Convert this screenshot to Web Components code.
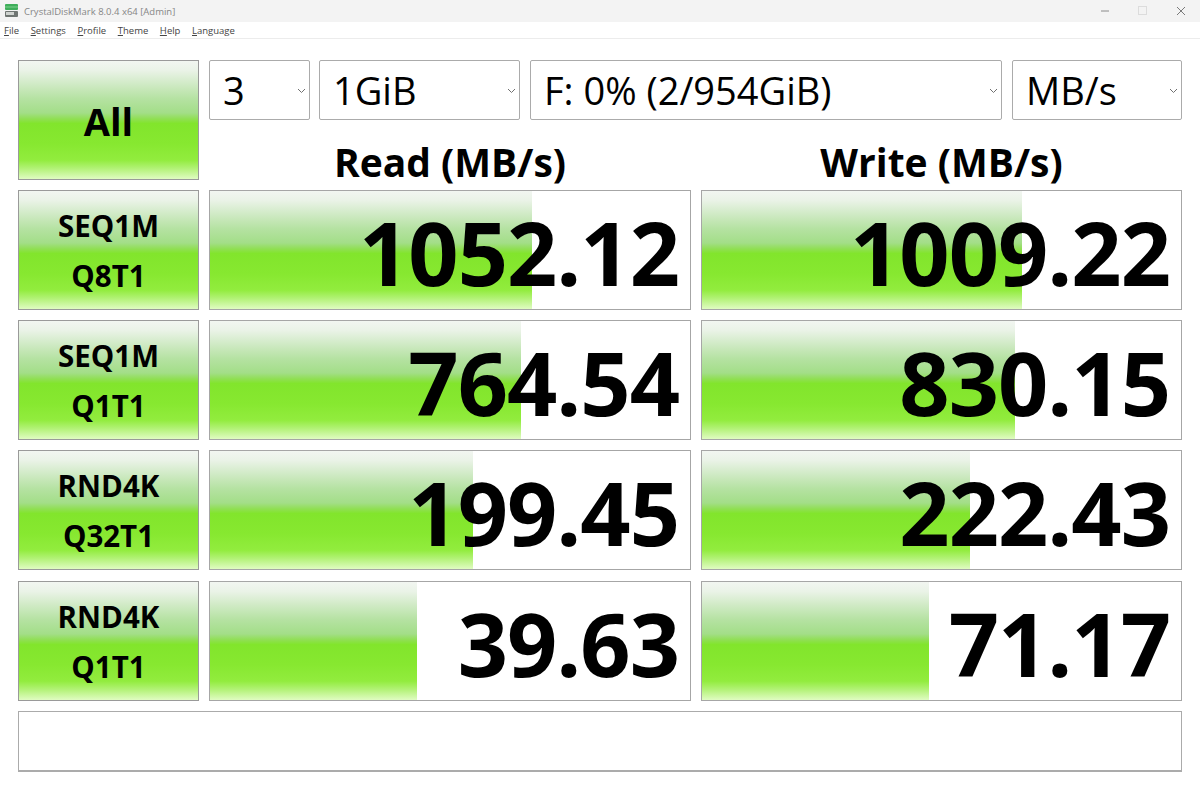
<!DOCTYPE html>
<html>
<head>
<meta charset="utf-8">
<title>CrystalDiskMark</title>
<style>
  html, body { margin: 0; padding: 0; background: #fff; height: 100%; overflow: hidden; }
  body { font-family: "Open Sans", "Noto Sans", sans-serif; color: #000; }
</style>
</head>
<body>
<cdm-window>
  <cdm-titlebar>CrystalDiskMark 8.0.4 x64 [Admin]</cdm-titlebar>
  <cdm-menu></cdm-menu>
  <cdm-panel></cdm-panel>
</cdm-window>

<script>
const GREEN = `linear-gradient(to bottom,
  #f2f6f1 0%, #eaf3e7 8%, #cfeac4 20%, #b5e2a2 32%, #a3de88 44%, #90df54 49%, #82e52c 53%, #87e830 70%, #92ec3e 84%, #b2f276 91%, #e0fcc2 100%)`;

class CdmWindow extends HTMLElement {
  constructor() {
    super();
    this.attachShadow({ mode: 'open' });
    this.shadowRoot.innerHTML = `
      <style>:host { display: flex; flex-direction: column; width: 1200px; height: 789px; }</style>
      <slot></slot>`;
  }
}

class CdmTitlebar extends HTMLElement {
  constructor() {
    super();
    this.attachShadow({ mode: 'open' });
    this.shadowRoot.innerHTML = `
      <style>
        :host { display: flex; align-items: center; height: 22px; background: #f3f3f3; padding-left: 5px; flex: none; }
        .logo { width: 14px; height: 14px; margin-right: 5px; }
        .t { font-size: 9.5px; color: #868686; flex: 1; }
        .btns { display: flex; align-items: center; }
        .btns svg { display: block; width: 10px; height: 10px; }
        .btns span { width: 38px; display: flex; justify-content: center; }
      </style>
      <svg class="logo" viewBox="0 0 14 14">
        <rect x="0" y="0" width="13" height="6" rx="1" fill="#3fae5a"/>
        <rect x="0" y="2.5" width="13" height="1" fill="#7fd08e"/>
        <rect x="0" y="7" width="13" height="6" rx="1" fill="#6f7572"/>
        <rect x="1" y="8" width="8" height="3" fill="#cfd3d0"/>
      </svg>
      <span class="t"><slot></slot></span>
      <span class="btns">
        <span><svg viewBox="0 0 10 10"><path d="M1 5h8" stroke="#8a8a8a" fill="none"/></svg></span>
        <span><svg viewBox="0 0 10 10"><rect x=".5" y=".5" width="8" height="8" stroke="#dcdcdc" fill="none"/></svg></span>
        <span><svg viewBox="0 0 10 10"><path d="M1 1l8 8M9 1l-8 8" stroke="#7a7a7a" fill="none"/></svg></span>
      </span>`;
  }
}

class CdmMenu extends HTMLElement {
  constructor() {
    super();
    this.attachShadow({ mode: 'open' });
    const items = ['File', 'Settings', 'Profile', 'Theme', 'Help', 'Language'];
    this.shadowRoot.innerHTML = `
      <style>
        :host { display: flex; gap: 11.6px; height: 16px; align-items: center; padding-left: 4px; font-size: 9.5px; color: #444;
          border-bottom: 1px solid #ececec; flex: none; }
        u { text-underline-offset: 1px; text-decoration-thickness: 1px; }
      </style>
      ${items.map(i => `<span><u>${i[0]}</u>${i.slice(1)}</span>`).join('')}`;
  }
}

class CdmSelect extends HTMLElement {
  constructor() {
    super();
    this.attachShadow({ mode: 'open' });
    this.shadowRoot.innerHTML = `
      <style>
        :host { display: flex; align-items: center; box-sizing: border-box; height: 60px; padding-left: 13px;
          border: 1px solid #ababab; border-radius: 2px; background: #fff; font-size: 38px; color: #000;
          position: relative; white-space: nowrap; }
        svg { position: absolute; right: 3px; top: 27px; width: 9px; height: 6px; }
      </style>
      <slot></slot>
      <svg viewBox="0 0 9 6"><path d="M1 1l3.5 3.5L8 1" stroke="#707070" fill="none"/></svg>`;
  }
}

class CdmButton extends HTMLElement {
  constructor() {
    super();
    this.attachShadow({ mode: 'open' });
    this.shadowRoot.innerHTML = `
      <style>
        :host { display: flex; flex-direction: column; align-items: center; justify-content: center; box-sizing: border-box;
          border: 1px solid #9a9a9a; background: ${GREEN}; font-weight: 700; color: #000; font-size: 29.5px; line-height: 50px;
          text-align: center; padding-top: 1px; }
      </style>
      <slot></slot>`;
  }
}

class CdmResult extends HTMLElement {
  constructor() {
    super();
    this.attachShadow({ mode: 'open' });
    this.shadowRoot.innerHTML = `
      <style>
        :host { display: block; box-sizing: border-box; border: 1px solid #a6a6a6; background: #fff; position: relative; }
        .bar { position: absolute; left: 0; top: 0; bottom: 0; background: ${GREEN}; }
        .v { position: absolute; right: 11px; top: 4px; bottom: 0; display: flex; align-items: center;
          font-weight: 700; font-size: 88px; letter-spacing: -1px; color: #000; }
      </style>
      <div class="bar" style="width:${this.getAttribute('bar')}px"></div>
      <div class="v"><slot></slot></div>`;
  }
}

class CdmPanel extends HTMLElement {
  constructor() {
    super();
    this.attachShadow({ mode: 'open' });
    const rows = [
      ['SEQ1M', 'Q8T1', '1052.12', 322, '1009.22', 320],
      ['SEQ1M', 'Q1T1', '764.54', 311, '830.15', 313],
      ['RND4K', 'Q32T1', '199.45', 263, '222.43', 268],
      ['RND4K', 'Q1T1', '39.63', 207, '71.17', 227],
    ];
    this.shadowRoot.innerHTML = `
      <style>
        :host { display: grid; grid-template-columns: 181px 482px 481px; column-gap: 10px;
          grid-template-rows: 120px 120px 120px 120px 121px 61px; row-gap: 10px; padding: 21px 0 0 18px; }
        .all { font-size: 38px; }
        .last { margin-top: 1px; }
        .top { grid-column: 2 / 4; display: flex; flex-direction: column; }
        .selects { display: flex; gap: 9px; }
        .heads { display: grid; grid-template-columns: 482px 481px; column-gap: 10px; flex: 1; }
        .heads div { text-align: center; font-weight: 700; font-size: 39px; line-height: 83px; height: 60px; }
        .comment { grid-column: 1 / 4; box-sizing: border-box; border: 1px solid #ababab; border-width: 1px 1px 2px 1px; background: #fff; }
      </style>
      <cdm-button class="all">All</cdm-button>
      <div class="top">
        <div class="selects">
          <cdm-select style="width:101px">3</cdm-select>
          <cdm-select style="width:201px">1GiB</cdm-select>
          <cdm-select style="width:472px;margin-left:1px;margin-right:1px">F: 0% (2/954GiB)</cdm-select>
          <cdm-select style="width:170px">MB/s</cdm-select>
        </div>
        <div class="heads"><div>Read (MB/s)</div><div>Write (MB/s)</div></div>
      </div>
      ${rows.map((r, i) => {
        const c = i === 3 ? ' class="last"' : '';
        return `
        <cdm-button${c}><span>${r[0]}</span><span>${r[1]}</span></cdm-button>
        <cdm-result${c} bar="${r[3]}">${r[2]}</cdm-result>
        <cdm-result${c} bar="${r[5]}">${r[4]}</cdm-result>`;
      }).join('')}
      <div class="comment"></div>`;
  }
}

customElements.define('cdm-window', CdmWindow);
customElements.define('cdm-titlebar', CdmTitlebar);
customElements.define('cdm-menu', CdmMenu);
customElements.define('cdm-select', CdmSelect);
customElements.define('cdm-button', CdmButton);
customElements.define('cdm-result', CdmResult);
customElements.define('cdm-panel', CdmPanel);
</script>
</body>
</html>
